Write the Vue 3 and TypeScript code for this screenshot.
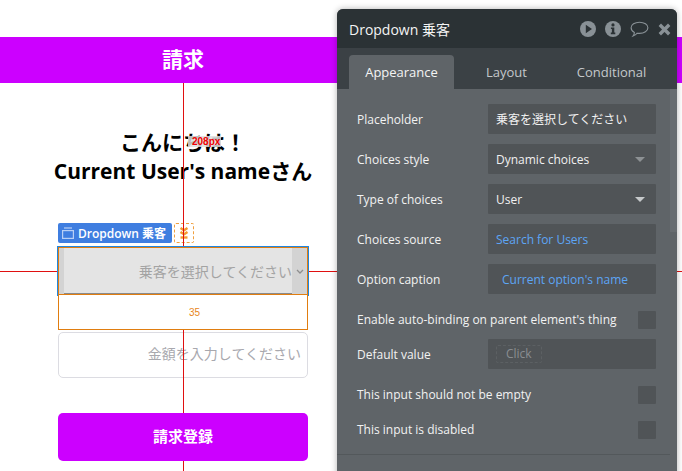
<script setup lang="ts">
// Property editor rows, top to bottom
interface Field {
  label: string
  kind: 'text' | 'select' | 'link' | 'check' | 'click'
  value?: string
  muted?: boolean
  indent?: boolean
}

const fields: Field[] = [
  { label: 'Placeholder', kind: 'text', value: '乗客を選択してください' },
  { label: 'Choices style', kind: 'select', value: 'Dynamic choices', muted: true },
  { label: 'Type of choices', kind: 'select', value: 'User' },
  { label: 'Choices source', kind: 'link', value: 'Search for Users' },
  { label: 'Option caption', kind: 'link', value: "Current option's name", indent: true },
  { label: 'Enable auto-binding on parent element\'s thing', kind: 'check' },
  { label: 'Default value', kind: 'click', value: 'Click' },
  { label: 'This input should not be empty', kind: 'check' },
  { label: 'This input is disabled', kind: 'check' },
]

const tabs = ['Appearance', 'Layout', 'Conditional']
</script>

<template>
  <div class="page">
    <header class="bar"><span class="bar-title">請求</span></header>

    <main class="form">
      <h1 class="greeting">こんにちは！<br />Current User's nameさん</h1>

      <div class="tag-row">
        <span class="tag">
          <svg width="12" height="12" viewBox="0 0 12 12" fill="none" stroke="#b9d0f5" stroke-width="1.2">
            <rect x="0.6" y="3.6" width="10.8" height="7.8" />
            <path d="M2 1h8" />
          </svg>
          Dropdown 乗客
        </span>
        <span class="tag-collapse">
          <svg width="10" height="12" viewBox="0 0 10 12" fill="none" stroke="#f59a30" stroke-width="2.4">
            <path d="M1.500 1l3.500 2.300L8.500 1M1.500 5l3.500 2.300L8.500 5" />
            <path d="M1.500 10.500h7" />
          </svg>
        </span>
      </div>

      <div class="dropdown">
        <span class="strip-left"></span>
        <span class="dropdown-text">乗客を選択してください</span>
        <span class="strip-right">
          <svg width="8" height="5" viewBox="0 0 8 5" fill="none" stroke="#8e8e8e" stroke-width="1.3">
            <path d="M1 1l3 3 3-3" />
          </svg>
        </span>
      </div>
      <div class="margin-box">35</div>
      <div class="amount">金額を入力してください</div>
      <button class="submit">請求登録</button>
    </main>

    <i class="guide guide-v"></i>
    <i class="guide guide-h"></i>
    <span class="distance">208px</span>

    <aside class="panel">
      <div class="panel-head">
        <span class="panel-title">Dropdown 乗客</span>
        <div class="panel-icons">
          <svg width="16" height="16" viewBox="0 0 16 16">
            <circle cx="8" cy="8" r="8" fill="#899196" />
            <path d="M5.800 3.800l6.200 4.200-6.200 4.200z" fill="#2b3235" />
          </svg>
          <svg width="16" height="16" viewBox="0 0 16 16">
            <circle cx="8" cy="8" r="8" fill="#899196" />
            <circle cx="8" cy="3.900" r="1.600" fill="#2b3235" />
            <path d="M5.900 6.400h3.400v5.200h1v1.600H5.800v-1.600h1.100V8H5.900z" fill="#2b3235" />
          </svg>
          <svg width="19" height="17" viewBox="0 0 19 17" fill="none" stroke="#899196" stroke-width="1.100">
            <path d="M9.500 1.200c4.700 0 8.400 2.400 8.400 5.600s-3.700 5.600-8.400 5.600c-.8 0-1.600-.1-2.300-.2-1 1.200-2.500 2.300-4.200 2.900.8-1 1.300-2.100 1.400-3.600C2.500 10.500 1.100 8.800 1.100 6.800c0-3.200 3.700-5.600 8.400-5.600z" />
          </svg>
          <svg class="icon-close" width="13" height="13" viewBox="0 0 13 13" fill="none" stroke="#899196" stroke-width="3.400">
            <path d="M1.800 1.800l9.400 9.400M11.200 1.800l-9.400 9.400" />
          </svg>
        </div>
      </div>

      <nav class="tabs">
        <span v-for="(tab, i) in tabs" :key="tab" class="tab" :class="{ active: i === 0 }">{{ tab }}</span>
      </nav>

      <div class="panel-body">
        <div class="rows">
          <div v-for="f in fields" :key="f.label" class="row" :class="{ 'row-check': f.kind === 'check' }">
            <label class="row-label">{{ f.label }}</label>
            <span v-if="f.kind === 'check'" class="checkbox"></span>
            <div v-else class="control" :class="{ indent: f.indent, link: f.kind === 'link' }">
              <span v-if="f.kind === 'click'" class="click-btn">{{ f.value }}</span>
              <span v-else>{{ f.value }}</span>
              <i v-if="f.kind === 'select'" class="caret" :class="{ muted: f.muted }"></i>
            </div>
          </div>
        </div>
        <div class="divider"></div>
        <div class="scroll"></div>
      </div>
    </aside>
  </div>
</template>

<style>
html,
body {
  margin: 0;
  background: #fff;
}
</style>

<style scoped>
.page {
  position: relative;
  width: 682px;
  height: 471px;
  overflow: hidden;
  background: #fff;
  font-family: 'Open Sans', 'Noto Sans CJK JP', sans-serif;
  padding-top: 37px;
  box-sizing: border-box;
}

.bar {
  height: 46px;
  background: #cc00ff;
  position: relative;
  z-index: 2;
}

.bar-title {
  display: block;
  width: 366px;
  text-align: center;
  line-height: 45px;
  color: #fff;
  font-size: 21px;
  font-weight: 700;
}

.form {
  width: 250px;
  margin-left: 58px;
}

.greeting {
  margin: 45px -30px 0;
  text-align: center;
  font-size: 21px;
  line-height: 29px;
  font-weight: 700;
  color: #000;
}

.tag-row {
  display: flex;
  gap: 2px;
  margin-top: 37px;
  height: 20px;
}

.tag {
  display: flex;
  align-items: center;
  gap: 4px;
  width: 114px;
  box-sizing: border-box;
  padding-left: 4px;
  background: #3f7ee0;
  border-radius: 2px;
  color: #fff;
  font-size: 12px;
  font-weight: 600;
  white-space: nowrap;
}

.tag-collapse {
  display: flex;
  align-items: center;
  justify-content: center;
  width: 20px;
  box-sizing: border-box;
  border: 1px dashed #f0a040;
  border-radius: 2px;
}

.dropdown {
  position: relative;
  z-index: 2;
  display: flex;
  align-items: center;
  justify-content: flex-end;
  height: 48px;
  margin-top: 4px;
  box-sizing: border-box;
  background: #e4e4e4;
  border: 1px solid #e07d10;
  outline: 1px solid #2087e0;
  outline-offset: 0;
  box-shadow: inset 0 -1px 0 #8a8a8a;
}

.strip-left {
  position: absolute;
  left: 0;
  top: 0;
  bottom: 0;
  width: 5px;
  background: #d3d3d3;
}

.strip-right {
  display: flex;
  align-items: center;
  justify-content: center;
  align-self: stretch;
  width: 15px;
  background: #d3d3d3;
}

.dropdown-text {
  font-size: 14px;
  color: #a3a3a3;
  white-space: nowrap;
}

.margin-box {
  height: 35px;
  box-sizing: border-box;
  border: 1px solid #e07d10;
  border-top: 0;
  background: #fff;
  position: relative;
  z-index: 2;
  text-align: center;
  padding-left: 23px;
  padding-top: 11px;
  font-size: 10px;
  line-height: 14px;
  color: #e8861a;
  font-family: 'Liberation Sans', sans-serif;
}

.amount {
  height: 46px;
  margin-top: 2px;
  box-sizing: border-box;
  border: 1px solid #dcdce2;
  border-radius: 5px;
  padding-right: 6px;
  text-align: right;
  line-height: 42px;
  font-size: 14px;
  color: #a8a8ae;
}

.submit {
  display: block;
  position: relative;
  z-index: 2;
  width: 100%;
  height: 48px;
  margin-top: 35px;
  padding: 0 0 3px;
  border: 0;
  border-radius: 5px;
  background: #cc00ff;
  color: #fff;
  font-family: inherit;
  font-size: 15px;
  font-weight: 700;
}

.guide {
  position: absolute;
  background: #e01010;
  z-index: 1;
}

.guide-v {
  left: 183px;
  top: 83px;
  bottom: 0;
  width: 1px;
}

.guide-h {
  left: 0;
  right: 0;
  top: 271px;
  height: 1px;
}

.distance {
  position: absolute;
  left: 188px;
  top: 136px;
  z-index: 1;
  padding: 0 1px 0 4px;
  background: rgba(222, 222, 222, 0.85);
  color: #f00000;
  font-size: 10px;
  line-height: 11px;
  font-weight: 700;
  font-family: 'Liberation Sans', sans-serif;
}

.panel {
  position: absolute;
  left: 337px;
  top: 9px;
  width: 340px;
  bottom: -20px;
  z-index: 5;
  border-radius: 6px 6px 0 0;
  overflow: hidden;
  background: #5f6468;
  box-shadow: 0 0 6px rgba(0, 0, 0, 0.3);
  display: flex;
  flex-direction: column;
  color: #fff;
}

.panel-head {
  display: flex;
  align-items: center;
  justify-content: space-between;
  height: 39px;
  flex: none;
  padding: 0 6px 0 12px;
  background: #2b3235;
}

.panel-title {
  font-size: 14px;
  color: #f4f4f4;
}

.panel-icons {
  display: flex;
  align-items: center;
  gap: 9px;
  padding-top: 1px;
}

.tabs {
  display: flex;
  flex: none;
  height: 41px;
  box-sizing: border-box;
  padding: 7px 0 0 12px;
  background: #3b4145;
}

.tab {
  width: 105px;
  text-align: center;
  line-height: 34px;
  font-size: 13px;
  color: #c4c8cb;
  border-radius: 4px 4px 0 0;
}

.tab.active {
  background: #5f6468;
  color: #f4f4f4;
}

.panel-body {
  position: relative;
  flex: 1;
}

.rows {
  padding: 15px 21px 0 20px;
  width: 299px;
}

.row {
  display: flex;
  align-items: center;
  justify-content: space-between;
  height: 30px;
  margin-bottom: 10px;
}

.row-check {
  height: 18px;
  margin-top: 17px;
}

.row-check .row-label {
  padding-bottom: 2px;
}

.row-label {
  font-size: 12px;
  color: #f2f2f2;
  white-space: nowrap;
}

.control {
  position: relative;
  display: flex;
  align-items: center;
  box-sizing: border-box;
  width: 168px;
  height: 30px;
  padding-left: 8px;
  background: #505457;
  border-radius: 1px;
  font-size: 12px;
  color: #f0f0f0;
}

.control.link {
  color: #5da5f5;
}

.control.indent {
  padding-left: 14px;
}

.caret {
  position: absolute;
  right: 11px;
  top: 13px;
  border-left: 5px solid transparent;
  border-right: 5px solid transparent;
  border-top: 5px solid #c6c9cb;
}

.caret.muted {
  border-top-color: #8d9194;
}

.checkbox {
  width: 18px;
  height: 18px;
  background: #505457;
  border-radius: 1px;
}

.click-btn {
  box-sizing: border-box;
  padding: 0 9px;
  line-height: 16px;
  border: 1px dashed #5c6063;
  border-radius: 2px;
  color: #8a8e91;
}

.divider {
  position: absolute;
  left: 0;
  width: 333px;
  top: 365px;
  height: 1px;
  background: #53585b;
}

.scroll {
  position: absolute;
  left: 333px;
  top: 0;
  width: 7px;
  height: 143px;
  background: #676c70;
}
</style>
